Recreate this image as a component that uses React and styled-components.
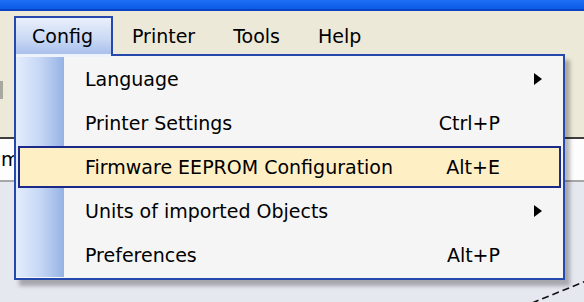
import React from "react";
import styled, { createGlobalStyle } from "styled-components";

const GlobalStyle = createGlobalStyle`
  html, body { margin: 0; padding: 0; overflow: hidden; background: #e6e8f0; }
`;

const Window = styled.div`
  position: relative;
  width: 584px;
  height: 302px;
  overflow: hidden;
  display: flex;
  flex-direction: column;
  font-family: "DejaVu Sans", "Liberation Sans", sans-serif;
  font-size: 19px;
  color: #000;
`;

const TitleBar = styled.div`
  height: 9px;
  flex: none;
  background: linear-gradient(#1f6ff5, #0a5ae6);
  border-bottom: 2px solid #0a44c2;
`;

const MenuBar = styled.div`
  height: 43px;
  flex: none;
  display: flex;
  align-items: flex-end;
  padding-left: 14px;
  background: #ece9d8;
`;

const MenuItem = styled.div`
  position: relative;
  height: 38px;
  box-sizing: border-box;
  display: flex;
  align-items: center;
  padding: 2px 19px 0;
  white-space: nowrap;
  ${(p) =>
    p.$open &&
    `
    z-index: 3;
    padding: 0 18px 0 16px;
    border: 2px solid #2448ac;
    border-bottom: 0;
    background: linear-gradient(#eaf0fc, #c9d8f4 60%, #a8c0ec);
    &::after {
      content: "";
      position: absolute;
      left: 0;
      right: 0;
      bottom: -3px;
      height: 3px;
      background: #eef2fb;
    }
  `}
`;

const Toolbar = styled.div`
  height: 83px;
  flex: none;
  display: flex;
  align-items: flex-start;
  background: #ece9d8;
`;

const ToolButtonEdge = styled.div`
  width: 3px;
  height: 18px;
  margin-top: 27px;
  background: #a9a89e;
`;

const Separator = styled.div`
  height: 2px;
  flex: none;
  background: #3e3e3e;
`;

const FieldRow = styled.div`
  height: 41px;
  flex: none;
  display: flex;
  align-items: center;
  background: #fdfdfd;
  border-bottom: 2px solid #a7a7a7;
`;

const FieldText = styled.span`
  padding-left: 1px;
  margin-top: -2px;
`;

const Canvas = styled.div`
  flex: 1;
  background: #e6e8f0;
`;

const Dropdown = styled.div`
  position: absolute;
  z-index: 2;
  top: 54px;
  left: 14px;
  width: 551px;
  box-sizing: border-box;
  padding: 1px 0;
  border: 2px solid #2448ac;
  background: linear-gradient(to right, #e3edfd, #c6d7f5 50%, #96b2e5) 0 1px / 48px calc(100% - 2px) no-repeat,
    #f5f5f5;
  box-shadow: 5px 6px 4px rgba(0, 0, 0, 0.28);
`;

const Row = styled.div`
  height: 44px;
  box-sizing: border-box;
  padding: 1px 2px;
`;

const RowInner = styled.div`
  height: 42px;
  box-sizing: border-box;
  display: grid;
  grid-template-columns: 1fr auto 59px;
  align-items: center;
  border: 2px solid ${(p) => (p.$active ? "#1b2a8a" : "transparent")};
  background: ${(p) => (p.$active ? "#ffefc5" : "transparent")};
`;

const Label = styled.span`
  padding-left: 65px;
  white-space: nowrap;
`;

const Shortcut = styled.span`
  white-space: nowrap;
`;

const ArrowCell = styled.span`
  display: flex;
  padding-left: 34px;
`;

const Arrow = styled.span`
  width: 0;
  height: 0;
  border-left: 8px solid #000;
  border-top: 6px solid transparent;
  border-bottom: 6px solid transparent;
`;

const items = [
  { label: "Language", submenu: true },
  { label: "Printer Settings", shortcut: "Ctrl+P" },
  { label: "Firmware EEPROM Configuration", shortcut: "Alt+E", active: true },
  { label: "Units of imported Objects", submenu: true },
  { label: "Preferences", shortcut: "Alt+P" },
];

export default function App() {
  return (
    <>
      <GlobalStyle />
      <Window>
        <TitleBar />
        <MenuBar>
          <MenuItem $open>Config</MenuItem>
          <MenuItem>Printer</MenuItem>
          <MenuItem>Tools</MenuItem>
          <MenuItem>Help</MenuItem>
        </MenuBar>
        <Toolbar>
          <ToolButtonEdge />
        </Toolbar>
        <Separator />
        <FieldRow>
          <FieldText>m</FieldText>
        </FieldRow>
        <Canvas>
          <svg width="584" height="120" viewBox="0 0 584 120" style={{ display: "block" }}>
            <line x1="532" y1="121" x2="586" y2="99" stroke="#111" strokeWidth="1.6" strokeDasharray="7 4" />
          </svg>
        </Canvas>
        <Dropdown>
          {items.map((it) => (
            <Row key={it.label}>
              <RowInner $active={it.active}>
                <Label>{it.label}</Label>
                <Shortcut>{it.shortcut || ""}</Shortcut>
                <ArrowCell>{it.submenu && <Arrow />}</ArrowCell>
              </RowInner>
            </Row>
          ))}
        </Dropdown>
      </Window>
    </>
  );
}
